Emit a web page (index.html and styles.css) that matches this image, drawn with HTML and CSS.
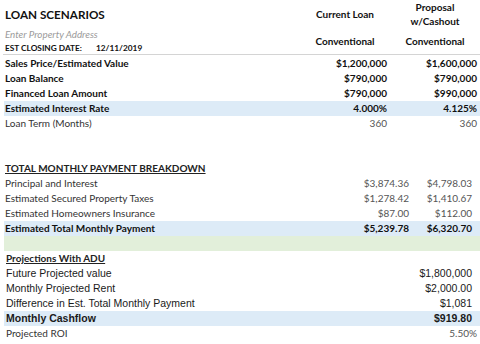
FILE: index.html
```html
<!DOCTYPE html>
<html>
<head>
<meta charset="utf-8">
<link rel="stylesheet" href="styles.css">
</head>
<body>
<div class="sheet">
  <div class="head">
    <div class="title">LOAN SCENARIOS</div>
    <div class="colhead">Current Loan</div>
    <div class="colhead two">Proposal<br>w/Cashout</div>
    <div class="meta">
      <div class="address">Enter Property Address</div>
      <div class="closing"><span class="closing-label">EST CLOSING DATE:</span><span>12/11/2019</span></div>
    </div>
    <div class="colhead">Conventional</div>
    <div class="colhead">Conventional</div>
  </div>

  <div class="sec1">
    <div class="row bold"><span class="lbl">Sales Price/Estimated Value</span><span class="val">$1,200,000</span><span class="val">$1,600,000</span></div>
    <div class="row bold"><span class="lbl">Loan Balance</span><span class="val">$790,000</span><span class="val">$790,000</span></div>
    <div class="row bold"><span class="lbl">Financed Loan Amount</span><span class="val">$790,000</span><span class="val">$990,000</span></div>
    <div class="row bold blue"><span class="lbl">Estimated Interest Rate</span><span class="val">4.000%</span><span class="val">4.125%</span></div>
    <div class="row light"><span class="lbl">Loan Term (Months)</span><span class="val">360</span><span class="val">360</span></div>
  </div>

  <div class="sec2">
    <div class="row2 heading"><span class="lbl u">TOTAL MONTHLY PAYMENT BREAKDOWN</span></div>
    <div class="row2 light"><span class="lbl">Principal and Interest</span><span class="val">$3,874.36</span><span class="val">$4,798.03</span></div>
    <div class="row2 light"><span class="lbl">Estimated Secured Property Taxes</span><span class="val">$1,278.42</span><span class="val">$1,410.67</span></div>
    <div class="row2 light"><span class="lbl">Estimated Homeowners Insurance</span><span class="val">$87.00</span><span class="val">$112.00</span></div>
    <div class="row2 bold blue"><span class="lbl">Estimated Total Monthly Payment</span><span class="val">$5,239.78</span><span class="val">$6,320.70</span></div>
    <div class="row2 green"></div>
  </div>

  <div class="sec3">
    <div class="row3 heading"><span class="lbl u">Projections With ADU</span></div>
    <div class="row3 arial"><span class="lbl">Future Projected value</span><span class="val">$1,800,000</span></div>
    <div class="row3 arial"><span class="lbl">Monthly Projected Rent</span><span class="val">$2,000.00</span></div>
    <div class="row3 arial"><span class="lbl">Difference in Est. Total Monthly Payment</span><span class="val">$1,081</span></div>
    <div class="row3 arial bold blue"><span class="lbl">Monthly Cashflow</span><span class="val">$919.80</span></div>
    <div class="row3 light roi"><span class="lbl">Projected ROI</span><span class="val">5.50%</span></div>
  </div>
</div>
</body>
</html>
```

FILE: styles.css
```css
* { box-sizing: border-box; }
html, body { margin: 0; padding: 0; background: #fff; }
body {
  font-family: Lato, "Open Sans", sans-serif;
  color: #111;
  width: 480px;
  height: 344px;
  overflow: hidden;
}
.sheet { width: 480px; }

.head {
  display: grid;
  grid-template-columns: 1fr 90px 90px;
  grid-template-rows: 27px 27px;
  border-bottom: 1px solid #d4d4d4;
  margin-left: 3px;
}
.title {
  font-weight: 700;
  font-size: 11.7px;
  align-self: center;
  padding-left: 2px;
  color: #111;
}
.colhead {
  font-weight: 700;
  font-size: 10px;
  text-align: center;
  align-self: center;
  line-height: 14px;
}
.meta {
  display: flex;
  flex-direction: column;
  padding-left: 2px;
}
.address {
  font-style: italic;
  font-size: 9.8px;
  color: #9a9a9a;
  height: 14px;
  line-height: 14px;
}
.closing {
  font-size: 8.3px;
  font-weight: 700;
  height: 14px;
  line-height: 14px;
  display: flex;
  gap: 14px;
}

.sec1 { padding-top: 1px; }
.row {
  display: grid;
  grid-template-columns: 1fr 90px 90px;
  height: 15px;
  line-height: 15px;
  font-size: 10px;
  margin-left: 4px;
}
.row .lbl { padding-left: 1px; white-space: nowrap; }
.row .val { text-align: right; padding-right: 3px; }
.bold { font-weight: 700; }
.light { font-weight: 400; color: #333; }
.light .val { color: #555; }
.blue { background: #ddebf7; }
.green { background: #e2efda; }

.sec2 { padding-top: 30px; }
.row2 {
  display: grid;
  grid-template-columns: 1fr 63px 63px;
  height: 15px;
  line-height: 15px;
  font-size: 10px;
  margin-left: 4px;
}
.row2 .lbl { padding-left: 1px; white-space: nowrap; }
.row2 .val { text-align: right; padding-right: 8px; }
.heading { font-weight: 700; color: #222; }
.u { text-decoration: underline; }

.row3 {
  display: grid;
  grid-template-columns: 1fr 90px;
  height: 15px;
  line-height: 15px;
  font-size: 10px;
  margin-left: 4px;
}
.row3 .lbl { padding-left: 2px; white-space: nowrap; }
.row3 .val { text-align: right; padding-right: 8px; }
.arial { font-family: "Liberation Sans", Arial, sans-serif; font-size: 10.5px; color: #1a1a1a; }
.roi .val { padding-right: 3px; }
```
